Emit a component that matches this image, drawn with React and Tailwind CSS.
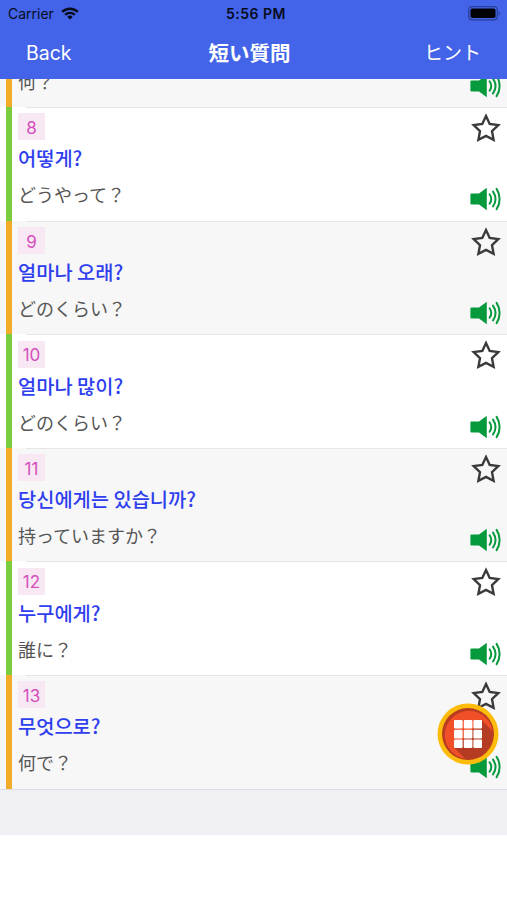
// The first row is scrolled under the nav, only its translation is still visible
const PHRASES = [
  { id: 7,  korean: '',                   japanese: '何？', scrolled: true },
  { id: 8,  korean: '어떻게?',            japanese: 'どうやって？' },
  { id: 9,  korean: '얼마나 오래?',       japanese: 'どのくらい？' },
  { id: 10, korean: '얼마나 많이?',       japanese: 'どのくらい？' },
  { id: 11, korean: '당신에게는 있습니까?', japanese: '持っていますか？' },
  { id: 12, korean: '누구에게?',          japanese: '誰に？' },
  { id: 13, korean: '무엇으로?',          japanese: '何で？' },
]

function WifiIcon() {
  return (
    <svg viewBox="0 0 18 13" className="w-[18px] h-[13px]" fill="none" stroke="#070b1c">
      <path d="M1.2 4.9a11 11 0 0 1 15.6 0" strokeWidth="2.5" />
      <path d="M4.2 7.9a6.8 6.8 0 0 1 9.6 0" strokeWidth="2.3" />
      <path d="M9 12.6 6.3 9.9a3.8 3.8 0 0 1 5.4 0z" fill="#070b1c" stroke="none" />
    </svg>
  )
}

function BatteryIcon() {
  return (
    <svg viewBox="0 0 33 15" className="w-[33px] h-[15px]">
      <rect x="0.7" y="0.7" width="28.6" height="13.2" rx="3.4" fill="none" stroke="#2a3f96" strokeWidth="1.2" />
      <rect x="2.5" y="2.5" width="25" height="9.6" rx="1.8" fill="#000" />
      <path d="M30.6 5c1.7.5 1.7 4.2 0 4.7z" fill="#2a3f96" />
    </svg>
  )
}

function StarIcon() {
  return (
    <svg viewBox="0 0 30 30" className="w-[30px] h-[30px]" fill="none" stroke="#3a3a3c" strokeWidth="2.4">
      <path d="M15 3l3.7 7.9 8.6 1.2-6.3 6 1.6 8.7-7.6-3.9-7.6 3.9 1.6-8.7-6.3-6 8.6-1.2z" />
    </svg>
  )
}

function SpeakerIcon() {
  return (
    <svg viewBox="0 0 32 24" className="w-8 h-6" fill="none" stroke="#079a3c" strokeWidth="2" strokeLinecap="round">
      <path d="M2.4 6.5H10L17.8.7v22.6L10 17.5H2.4a1 1 0 0 1-1-1v-9a1 1 0 0 1 1-1z" fill="#079a3c" stroke="none" />
      <path d="M20.6 7.2c2 2.9 2 6.7 0 9.6" />
      <path d="M24 4.6c3.1 4.5 3.1 10.3 0 14.8" />
      <path d="M27.6 1.9c4 6 4 14.2 0 20.2" />
    </svg>
  )
}

function GridButton() {
  return (
    <button className="absolute left-[437px] top-[703px]">
      <svg viewBox="0 0 62 62" className="w-[62px] h-[62px]">
        <defs>
          <clipPath id="disc">
            <circle cx="31.5" cy="31.5" r="24.6" />
          </clipPath>
        </defs>
        <circle cx="31" cy="31" r="30.5" fill="#fdbc0b" />
        <circle cx="31" cy="31" r="26" fill="#b93c22" />
        <circle cx="32" cy="32" r="24.2" fill="#f04f28" clipPath="url(#disc)" />
        <path d="M45 17.5 62 34.5V62H34.5L17.5 45z" fill="#b53c22" clipPath="url(#disc)" />
        <g fill="#fff">
          {[17, 26.8, 36.4].map((y) =>
            [17, 26.8, 36.4].map((x) => <rect key={`${x}-${y}`} x={x} y={y} width="8.6" height="8.6" rx="1" />)
          )}
        </g>
      </svg>
    </button>
  )
}

function PhraseRow({ id, korean, japanese, scrolled }) {
  const odd = id % 2 === 1
  return (
    <li className={`flex shrink-0 h-[113.6px] pl-1.5 ${odd ? 'bg-[#f7f7f7]' : 'bg-white'}`}>
      <div className={`w-1.5 shrink-0 ${odd ? 'bg-[#f3ac28]' : 'bg-[#7bcd3f]'}`} />
      <div className="flex flex-1 flex-col">
        <div className="ml-3.5 h-px shrink-0 bg-[#e6e6e8]" />
        <div className="flex flex-1 justify-between pl-1.5 pr-1.5">
          <div className="flex flex-col items-start pt-[5.4px]">
            <span className="flex h-[27px] w-[27px] items-center justify-center bg-[#f8e8f4] pt-0.5 text-[17px] leading-6 text-[#d44fba] font-['Inter',sans-serif]">
              {!scrolled && id}
            </span>
            <p className="mt-1 h-7 whitespace-nowrap text-[19.8px] leading-7 font-medium text-[#2f3fee] font-['Noto_Sans_CJK_KR',sans-serif]">
              {korean}
            </p>
            <p className="mt-2 h-7 whitespace-nowrap text-[18px] leading-7 text-[#555] font-['Noto_Sans_CJK_JP',sans-serif]">
              {japanese}
            </p>
          </div>
          <div className="flex flex-col items-end justify-between pt-[5px] pb-[9.2px]">
            <StarIcon />
            <SpeakerIcon />
          </div>
        </div>
      </div>
    </li>
  )
}

export default function App() {
  return (
    <div className="relative flex h-[900px] w-[507px] flex-col overflow-hidden bg-white font-['Inter',sans-serif]">
      {/* Status bar + nav */}
      <header className="h-[79px] shrink-0 bg-[#4364e8]">
        <div className="grid h-[27px] grid-cols-3 items-center pl-2 pr-1.5 text-[#070b1c]">
          <div className="flex items-center gap-[7px] text-[14px]">
            Carrier
            <WifiIcon />
          </div>
          <div className="pl-[3px] text-center text-[14px] tracking-[0.5px] font-semibold">5:56 PM</div>
          <div className="flex justify-end">
            <BatteryIcon />
          </div>
        </div>
        <nav className="grid h-[52px] grid-cols-3 items-center pb-[3px] pl-[26px] pr-[26px] text-white">
          <button className="pt-0.5 text-left text-[19.5px] leading-7">Back</button>
          <h1 className="pr-2 text-center text-[20.5px] leading-7 font-bold font-['Noto_Sans_CJK_JP',sans-serif]">短い質問</h1>
          <button className="text-right text-[19px] leading-7 font-normal font-['Noto_Sans_CJK_JP',sans-serif]">ヒント</button>
        </nav>
      </header>

      {/* Phrase list, scrolled to the end */}
      <main className="flex h-[756px] shrink-0 flex-col bg-[#efeff4]">
        <ul className="flex h-[709.6px] flex-col justify-end overflow-hidden">
          {PHRASES.map((p) => (
            <PhraseRow key={p.id} {...p} />
          ))}
        </ul>
        <div className="h-px bg-[#dfdfe3]" />
      </main>

      <GridButton />
    </div>
  )
}
